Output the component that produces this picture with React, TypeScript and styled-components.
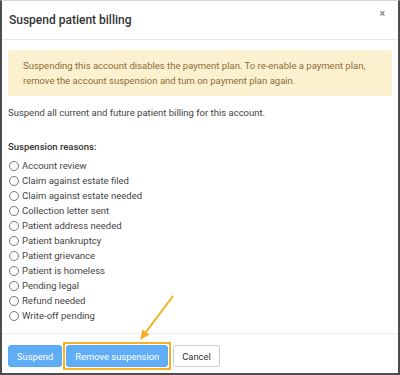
import styled, { createGlobalStyle } from "styled-components";

const GlobalStyle = createGlobalStyle`
  body {
    margin: 0;
    font-family: Roboto, "Liberation Sans", sans-serif;
    color: #333;
  }
`;

const Frame = styled.div`
  position: relative;
  width: 400px;
  height: 375px;
  box-sizing: border-box;
  background: #fff;
  border: 2px solid #4d4d4d;
  border-top: 1px solid #d4d4d4;
  display: flex;
  flex-direction: column;
`;

const Header = styled.div`
  height: 38px;
  display: flex;
  align-items: center;
  justify-content: space-between;
  padding: 0 7px;
  border-bottom: 1px solid #e8e8e8;
`;

const Title = styled.h4`
  margin: 0;
  font-size: 12px;
  font-weight: 500;
  color: #333;
`;

const Close = styled.span`
  font-size: 10px;
  color: #888;
  font-weight: 700;
  margin-top: -14px;
  margin-right: 6px;
`;

const Body = styled.div`
  padding: 10px 6px 10px;
  font-size: 9.5px;
  line-height: 15px;
  color: #444;
  border-bottom: 1px solid #eee;
`;

const Alert = styled.div`
  background: #fcf1cf;
  color: #8a6d3b;
  border-radius: 3px;
  padding: 8px 14px 8px 15px;
`;

const Text = styled.p`
  margin: 9px 0 0;
`;

const Label = styled.div`
  margin-top: 19px;
  font-weight: 500;
  color: #333;
`;

const Reasons = styled.div`
  margin-top: 4px;
  display: flex;
  flex-direction: column;
`;

const Reason = styled.label`
  display: flex;
  align-items: center;
  gap: 3px;
  height: 15px;
  padding-left: 1px;
`;

const Radio = styled.span`
  width: 8px;
  height: 8px;
  border: 1px solid #777;
  border-radius: 50%;
  background: #fff;
`;

const Footer = styled.div`
  flex: 1;
  display: flex;
  align-items: center;
  padding: 5px 6px 0;
`;

const Button = styled.button<{ $primary?: boolean }>`
  height: 22px;
  padding: 0 8px;
  font-family: Roboto, "Liberation Sans", sans-serif;
  font-size: 9.4px;
  border-radius: 3px;
  border: 1px solid ${(p) => (p.$primary ? "#5aa9f4" : "#ccc")};
  background: ${(p) => (p.$primary ? "#5fadf6" : "#fff")};
  color: ${(p) => (p.$primary ? "#fff" : "#333")};
`;

const Highlight = styled.div`
  border: 2px solid #f7b226;
  padding: 1px;
  margin: 0 2px 0 1px;
  display: flex;
`;

const Arrow = styled.svg`
  position: absolute;
  left: -2px;
  top: -1px;
  pointer-events: none;
`;

const reasons = [
  "Account review",
  "Claim against estate filed",
  "Claim against estate needed",
  "Collection letter sent",
  "Patient address needed",
  "Patient bankruptcy",
  "Patient grievance",
  "Patient is homeless",
  "Pending legal",
  "Refund needed",
  "Write-off pending",
];

export default function App() {
  return (
    <>
      <GlobalStyle />
      <Frame>
        <Header>
          <Title>Suspend patient billing</Title>
          <Close>×</Close>
        </Header>
        <Body>
          <Alert>
            Suspending this account disables the payment plan. To re-enable a payment plan,
            remove the account suspension and turn on payment plan again.
          </Alert>
          <Text>Suspend all current and future patient billing for this account.</Text>
          <Label>Suspension reasons:</Label>
          <Reasons>
            {reasons.map((r) => (
              <Reason key={r}>
                <Radio />
                {r}
              </Reason>
            ))}
          </Reasons>
        </Body>
        <Footer>
          <Button $primary>Suspend</Button>
          <Highlight>
            <Button $primary>Remove suspension</Button>
          </Highlight>
          <Button>Cancel</Button>
        </Footer>
        <Arrow width="400" height="375">
          <line x1="173" y1="296" x2="146" y2="332" stroke="#f5ae1e" strokeWidth="2" />
          <polygon points="140,340 149.5,334.5 142.5,329.5" fill="#f5ae1e" />
        </Arrow>
      </Frame>
    </>
  );
}
